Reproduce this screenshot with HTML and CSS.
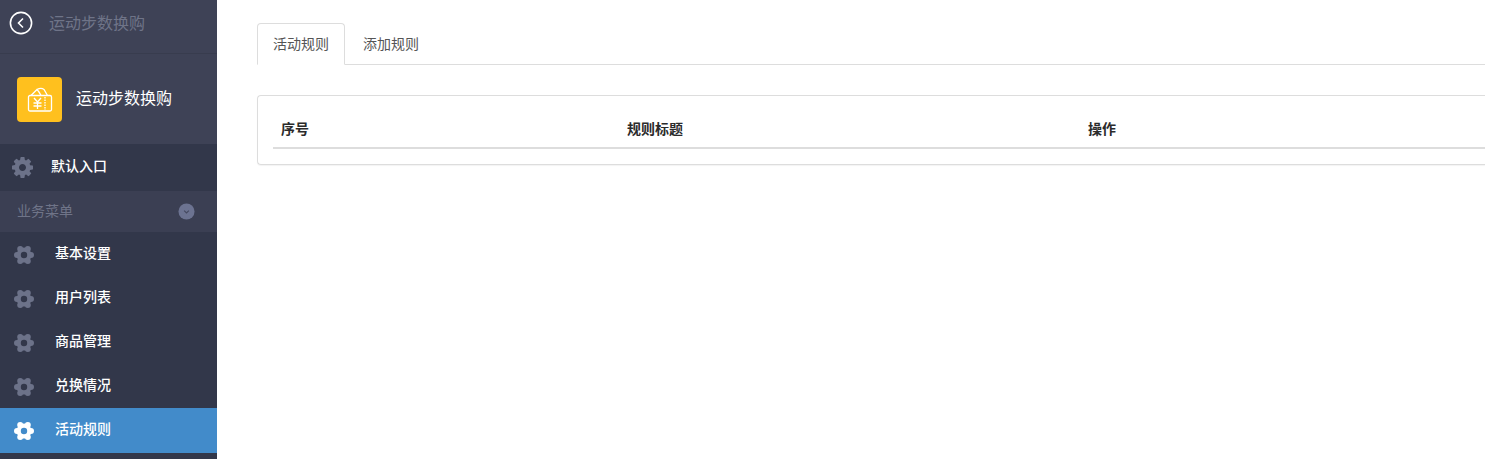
FILE: index.html
```html
<!DOCTYPE html>
<html>
<head>
    <meta charset="utf-8">
    <link rel="stylesheet" href="styles.css">
</head>
<body>
    <svg class="defs">
        <symbol id="cog" viewBox="0 0 1536 1536">
            <path d="M1024 768q0-106-75-181t-181-75-181 75-75 181 75 181 181 75 181-75 75-181zm512-109v222q0 12-8 23t-20 13l-185 28q-19 54-39 91 35 50 107 138 10 12 10 25t-9 23q-27 37-99 108t-94 71q-12 0-26-9l-138-108q-44 23-91 38-16 136-29 186-7 28-36 28h-222q-14 0-24.5-8.5t-11.5-21.5l-28-184q-49-16-90-37l-141 107q-10 9-25 9-14 0-25-11-126-114-165-168-7-10-7-23 0-12 8-23 15-21 51-66.5t54-70.5q-27-50-41-99l-183-27q-13-2-21-12.5t-8-23.5v-222q0-12 8-23t19-13l186-28q14-46 39-92-40-57-107-138-10-12-10-24 0-10 9-23 26-36 98.5-107.5t94.5-71.5q13 0 26 10l138 107q44-23 91-38 16-136 29-186 7-28 36-28h222q14 0 24.5 8.5t11.5 21.5l28 184q49 16 90 37l142-107q9-9 24-9 13 0 25 10 129 119 165 170 7 8 7 22 0 12-8 23-15 21-51 66.5t-54 70.5q26 50 41 98l183 28q13 2 21 12.5t8 23.5z"/>
        </symbol>
        <symbol id="flower" viewBox="-10 -10 20 20">
            <path d="M-7.500 0a7.500 7.500 0 1 0 15 0a7.500 7.500 0 1 0-15 0z
                     M4 0a3 3 0 1 0 6 0a3 3 0 1 0-6 0z
                     M-10 0a3 3 0 1 0 6 0a3 3 0 1 0-6 0z
                     M.8 -6a3 3 0 1 0 6 0a3 3 0 1 0-6 0z
                     M-6.800 -6a3 3 0 1 0 6 0a3 3 0 1 0-6 0z
                     M.8 6a3 3 0 1 0 6 0a3 3 0 1 0-6 0z
                     M-6.800 6a3 3 0 1 0 6 0a3 3 0 1 0-6 0z
                     M-3.200 0a3.200 3.200 0 1 1 6.400 0a3.200 3.200 0 1 1-6.400 0z"/>
        </symbol>
    </svg>

    <div class="page">
        <!-- Sidebar -->
        <div class="sidebar">
            <div class="back-bar">
                <svg class="back-icon" viewBox="0 0 24 24">
                    <circle cx="12" cy="12" r="10.6"/>
                    <path d="M14 7.500 9.500 12l4.500 4.500"/>
                </svg>
                <span class="back-title">运动步数换购</span>
            </div>

            <div class="brand">
                <div class="brand-logo">
                    <svg viewBox="0 0 26 25">
                        <path d="M4 8.500 10 2.500c1.500 1.500 3 4 4 6"/>
                        <path d="M10 2.500c3-1.500 5-1.500 7 0l3.500 6"/>
                        <rect x="1.500" y="8.500" width="23" height="15.500" rx="1.500"/>
                        <path d="M7 11l3.500 4 3.500-4M10.500 15v7M6.500 16h8M6.500 19h8"/>
                        <path class="dash" d="M18 10v13"/>
                    </svg>
                </div>
                <span class="brand-name">运动步数换购</span>
            </div>

            <div class="entry">
                <svg class="cog"><use href="#cog"/></svg>
                <span>默认入口</span>
            </div>

            <div class="section">
                <span>业务菜单</span>
                <svg class="section-toggle" viewBox="0 0 18 18">
                    <circle cx="9" cy="9" r="8.500"/>
                    <path d="M6.500 8 9 10.500 11.500 8"/>
                </svg>
            </div>

            <div class="menu-item">
                <svg class="cog"><use href="#flower"/></svg>
                <span>基本设置</span>
            </div>
            <div class="menu-item">
                <svg class="cog"><use href="#flower"/></svg>
                <span>用户列表</span>
            </div>
            <div class="menu-item">
                <svg class="cog"><use href="#flower"/></svg>
                <span>商品管理</span>
            </div>
            <div class="menu-item">
                <svg class="cog"><use href="#flower"/></svg>
                <span>兑换情况</span>
            </div>
            <div class="menu-item active">
                <svg class="cog"><use href="#flower"/></svg>
                <span>活动规则</span>
            </div>
        </div>

        <!-- Main content -->
        <div class="main">
            <div class="tabs">
                <div class="tab active">活动规则</div>
                <div class="tab">添加规则</div>
            </div>

            <div class="panel">
                <div class="table-head">
                    <div class="col-id">序号</div>
                    <div class="col-title">规则标题</div>
                    <div class="col-op">操作</div>
                </div>
            </div>
        </div>
    </div>
</body>
</html>
```

FILE: styles.css
```css
* {
    box-sizing: border-box;
}
html, body {
    height: 100%;
}
body {
    margin: 0;
    overflow: hidden;
    background: #fff;
    font-family: "Liberation Sans", "Noto Sans CJK SC", sans-serif;
    font-size: 14px;
    color: #333;
}
.defs {
    display: none;
}
.page {
    display: flex;
    height: 459px;
}

/* Sidebar */
.sidebar {
    width: 217px;
    flex-shrink: 0;
    background: #32374a;
    color: #fff;
}
.back-bar {
    height: 54px;
    display: flex;
    align-items: center;
    padding: 0 0 8px 9px;
    background: #3e4256;
    border-bottom: 1px solid #383c4e;
}
.back-icon {
    width: 24px;
    height: 24px;
    fill: none;
    stroke: #fff;
    stroke-width: 1.6;
}
.back-title {
    margin: 0 0 2px 16px;
    font-size: 16px;
    color: #6f7488;
}
.brand {
    height: 90px;
    display: flex;
    align-items: center;
    padding-left: 17px;
    background: #3e4256;
}
.brand-logo {
    width: 45px;
    height: 45px;
    display: flex;
    align-items: center;
    justify-content: center;
    background: #ffc01e;
    border-radius: 4px;
}
.brand-logo svg {
    width: 26px;
    height: 25px;
    fill: none;
    stroke: #fff;
    stroke-width: 1.3;
}
.brand-logo .dash {
    stroke-dasharray: 1.500 1;
}
.brand-name {
    margin: 0 0 4px 14px;
    font-size: 16px;
}
.cog {
    width: 21px;
    height: 21px;
    fill: #6c7289;
    flex-shrink: 0;
}
.entry {
    height: 47px;
    display: flex;
    align-items: center;
    padding-left: 12px;
    font-weight: 500;
}
.entry span {
    margin: 0 0 6px 18px;
}
.section {
    height: 41px;
    display: flex;
    align-items: center;
    justify-content: space-between;
    padding: 0 22px 0 17px;
    background: #3b3f53;
    color: #6f7488;
}
.section span {
    margin-bottom: 4px;
}
.section-toggle {
    width: 17px;
    height: 17px;
    fill: #6c7391;
    stroke: none;
}
.section-toggle path {
    fill: none;
    stroke: #454a60;
    stroke-width: 1.2;
}
.menu-item {
    height: 44px;
    display: flex;
    align-items: center;
    padding-left: 14px;
    font-weight: 500;
}
.menu-item .cog {
    width: 20px;
    height: 20px;
    margin-top: 1px;
}
.menu-item span {
    margin: 0 0 4px 21px;
}
.menu-item.active {
    height: 45px;
    padding-bottom: 1px;
    background: #428bca;
}
.menu-item.active .cog {
    fill: #fff;
}

/* Main */
.main {
    flex: 1;
    min-width: 0;
    padding: 23px 0 0 40px;
}
.tabs {
    display: flex;
    height: 42px;
    border-bottom: 1px solid #ddd;
}
.tab {
    height: 42px;
    margin-right: 2px;
    padding: 0 15px;
    line-height: 40px;
    color: #555;
    border: 1px solid transparent;
}
.tab.active {
    background: #fff;
    border-color: #ddd;
    border-bottom-color: #fff;
    border-radius: 4px 4px 0 0;
}
.panel {
    margin-top: 30px;
    height: 70px;
    padding: 15px 0 0 15px;
    border: 1px solid #ddd;
    border-right: none;
    border-radius: 4px 0 0 4px;
    box-shadow: 0 1px 1px rgba(0,0,0,0.05);
}
.table-head {
    display: flex;
    height: 38px;
    line-height: 36px;
    font-weight: bold;
    color: #2b2b2b;
    border-bottom: 2px solid #ddd;
}
.col-id {
    width: 346px;
    padding-left: 8px;
}
.col-title {
    width: 461px;
    padding-left: 8px;
}
.col-op {
    padding-left: 8px;
}
```
